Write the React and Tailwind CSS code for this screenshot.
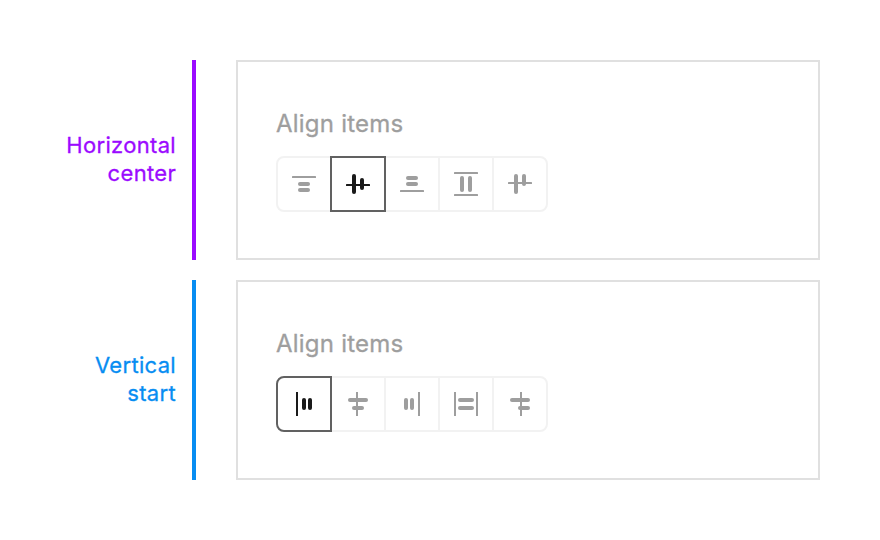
const sections = [
  {
    lines: ["Horizontal", "center"],
    text: "text-[#9b0aff]",
    bar: "bg-[#9b0aff]",
    selected: 1,
    // Each icon is a list of [x, y, width, height, radius] on a 24px grid.
    icons: [
      [[0, 4, 24, 2, 0.5], [6, 10, 12, 4, 2], [6, 16, 12, 4, 2]],
      [[0, 12, 24, 2, 0.5], [6, 2, 4, 20, 2], [14, 6, 4, 12, 2]],
      [[6, 4, 12, 4, 2], [6, 10, 12, 4, 2], [0, 18, 24, 2, 0.5]],
      [[0, 0, 24, 2, 0.5], [6, 4, 4, 16, 2], [14, 4, 4, 16, 2], [0, 22, 24, 2, 0.5]],
      [[0, 10, 24, 2, 0.5], [6, 2, 4, 20, 2], [14, 2, 4, 12, 2]],
    ],
  },
  {
    lines: ["Vertical", "start"],
    text: "text-[#078df2]",
    bar: "bg-[#078df2]",
    selected: 0,
    icons: [
      [[4, 0, 2, 24, 0], [10, 6, 4, 12, 2], [16, 6, 4, 12, 2]],
      [[10, 0, 2, 24, 0], [2, 6, 20, 4, 2], [6, 14, 12, 4, 2]],
      [[4, 6, 4, 12, 2], [10, 6, 4, 12, 2], [18, 0, 2, 24, 0]],
      [[0, 0, 2, 24, 0], [4, 6, 16, 4, 2], [4, 14, 16, 4, 2], [22, 0, 2, 24, 0]],
      [[12, 0, 2, 24, 0], [2, 6, 20, 4, 2], [10, 14, 12, 4, 2]],
    ],
  },
];

function Icon({ shapes }) {
  return (
    <svg width="24" height="24" viewBox="0 0 24 24" fill="currentColor">
      {shapes.map(([x, y, w, h, r], i) => (
        <rect key={i} x={x} y={y} width={w} height={h} rx={r} />
      ))}
    </svg>
  );
}

function AlignButtons({ icons, selected }) {
  return (
    <div className="flex">
      {icons.map((shapes, i) => (
        <button
          key={i}
          className={`-mr-0.5 flex size-14 items-center justify-center border-2 first:rounded-l-lg last:rounded-r-lg ${
            i === selected
              ? "z-10 border-[#616161] text-[#1a1a1a]"
              : "border-[#f2f2f2] text-[#9e9e9e]"
          }`}
        >
          <Icon shapes={shapes} />
        </button>
      ))}
    </div>
  );
}

function Section({ lines, text, bar, icons, selected }) {
  return (
    <section className="flex h-[200px]">
      <div className={`flex w-44 flex-col justify-center pb-0.5 text-right text-[22px] leading-7 tracking-[0.32px] ${text}`}>
        {lines.map((line) => (
          <span key={line}>{line}</span>
        ))}
      </div>
      <div className={`ml-4 w-1 ${bar}`} />
      <div className="ml-10 w-[584px] border-2 border-[#e0e0e0] pt-[46px] pl-[38px]">
        <h2 className="mb-4 text-2xl leading-8 tracking-[0.22px] text-[#9e9e9e]">Align items</h2>
        <AlignButtons icons={icons} selected={selected} />
      </div>
    </section>
  );
}

export default function App() {
  return (
    <main className="flex h-[540px] w-[880px] flex-col gap-5 bg-white pt-[60px] font-['Inter',sans-serif] [-webkit-text-stroke:0.3px_currentColor]">
      {sections.map((section) => (
        <Section key={section.lines[0]} {...section} />
      ))}
    </main>
  );
}
